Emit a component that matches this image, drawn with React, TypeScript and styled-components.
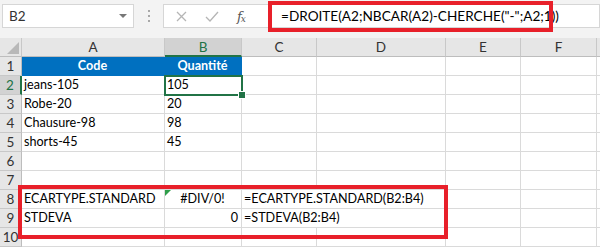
import React from "react";
import styled, { createGlobalStyle } from "styled-components";

const Global = createGlobalStyle`
  html, body { margin: 0; padding: 0; background: #ffffff; overflow: hidden; }
  body { font-family: Lato, "Noto Sans", sans-serif; }
`;

const Page = styled.div`
  position: relative;
  width: 600px;
  height: 250px;
  overflow: hidden;
  background: #ffffff;
`;

const Toolbar = styled.div`
  height: 38px;
  background: #f3f3f3;
  display: flex;
  align-items: flex-start;
  padding: 4px 0 0 2px;
  box-sizing: border-box;
`;

const NameBox = styled.div`
  width: 132px;
  height: 24px;
  box-sizing: border-box;
  background: #ffffff;
  border: 1px solid #d6d6d6;
  display: flex;
  align-items: center;
  justify-content: space-between;
  padding: 0 6px 0 6px;
  font-size: 13.5px;
  color: #333;
`;

const Caret = styled.span`
  width: 0;
  height: 0;
  border-left: 4px solid transparent;
  border-right: 4px solid transparent;
  border-top: 4px solid #777;
`;

const Grip = styled.div`
  width: 29px;
  height: 24px;
  display: flex;
  justify-content: center;
  align-items: center;
`;

const Dots = styled.div`
  display: flex;
  flex-direction: column;
  gap: 3px;
  & > span { width: 2px; height: 2px; background: #a8a8a8; display: block; }
`;

const Buttons = styled.div`
  width: 105px;
  height: 24px;
  box-sizing: border-box;
  background: #ffffff;
  border: 1px solid #d6d6d6;
  border-right: none;
  display: flex;
  align-items: center;
  padding-left: 12px;
  gap: 18px;
`;

const Fx = styled.span`
  font-family: "DejaVu Serif", "Liberation Serif", serif;
  font-style: italic;
  font-size: 13px;
  color: #555;
  letter-spacing: -1px;
  & > sub { font-size: 9px; vertical-align: -1px; }
`;

const Formula = styled.div`
  flex: 1;
  height: 24px;
  box-sizing: border-box;
  background: #ffffff;
  border: 1px solid #d6d6d6;
  display: flex;
  align-items: center;
  padding-left: 12px;
  font-size: 13.6px;
  color: #000;
  white-space: nowrap;
`;

const Sheet = styled.div`
  position: relative;
  display: grid;
  grid-template-columns: 22px 143px 77px 75px 129px 75px 76px 1fr;
  grid-auto-rows: 19px;
`;

const Corner = styled.div`
  background: #e6e6e6;
  border-right: 1px solid #c8c8c8;
  border-bottom: 1px solid #bdbdbd;
  box-sizing: border-box;
  position: relative;
  &::after {
    content: "";
    position: absolute;
    right: 2px;
    bottom: 2px;
    width: 0;
    height: 0;
    border-left: 12px solid transparent;
    border-bottom: 12px solid #b8b8b8;
  }
`;

const ColHead = styled.div<{ $sel?: boolean }>`
  background: ${(p) => (p.$sel ? "#d2d2d2" : "#e6e6e6")};
  color: ${(p) => (p.$sel ? "#217346" : "#333")};
  border-right: 1px solid #c8c8c8;
  border-bottom: ${(p) => (p.$sel ? "2px solid #217346" : "1px solid #bdbdbd")};
  box-sizing: border-box;
  display: flex;
  align-items: center;
  justify-content: center;
  font-size: 13.5px;
`;

const RowHead = styled.div<{ $sel?: boolean }>`
  background: ${(p) => (p.$sel ? "#d2d2d2" : "#e6e6e6")};
  color: ${(p) => (p.$sel ? "#217346" : "#333")};
  border-right: ${(p) => (p.$sel ? "2px solid #217346" : "1px solid #bdbdbd")};
  border-bottom: 1px solid #c8c8c8;
  box-sizing: border-box;
  display: flex;
  align-items: center;
  justify-content: center;
  font-size: 13.5px;
`;

const Cell = styled.div<{ $align?: "left" | "center" | "right"; $head?: boolean; $span?: number }>`
  grid-column: span ${(p) => p.$span ?? 1};
  background: ${(p) => (p.$head ? "#0070c0" : "#ffffff")};
  color: ${(p) => (p.$head ? "#ffffff" : "#000000")};
  font-weight: ${(p) => (p.$head ? 700 : 400)};
  border-right: 1px solid ${(p) => (p.$head ? "#0070c0" : "#dadada")};
  border-bottom: 1px solid ${(p) => (p.$head ? "#0070c0" : "#dadada")};
  box-sizing: border-box;
  display: flex;
  align-items: flex-end;
  padding: 0 3px 1px 2px;
  justify-content: ${(p) =>
    p.$align === "center" ? "center" : p.$align === "right" ? "flex-end" : "flex-start"};
  font-size: 12.6px;
  line-height: 17px;
  white-space: nowrap;
  position: relative;
`;

const ErrorMark = styled.span`
  position: absolute;
  left: 0;
  top: 0;
  width: 0;
  height: 0;
  border-top: 6px solid #2e9e4a;
  border-right: 6px solid transparent;
`;

const Selection = styled.div`
  position: absolute;
  left: 164px;
  top: 37px;
  width: 79px;
  height: 21px;
  border: 2px solid #217346;
  box-sizing: border-box;
  pointer-events: none;
  &::after {
    content: "";
    position: absolute;
    right: -5px;
    bottom: -5px;
    width: 6px;
    height: 6px;
    background: #217346;
    border: 1px solid #ffffff;
  }
`;

const RedBox = styled.div`
  position: absolute;
  border: 4px solid #e8202a;
  box-sizing: border-box;
  pointer-events: none;
`;

const cols = ["A", "B", "C", "D", "E", "F", ""];

type Row = { a?: string; b?: string; bAlign?: "left" | "center" | "right"; c?: string; err?: boolean };

const rows: Row[] = [
  { a: "jeans-105", b: "105" },
  { a: "Robe-20", b: "20" },
  { a: "Chausure-98", b: "98" },
  { a: "shorts-45", b: "45" },
  {},
  {},
  { a: "ECARTYPE.STANDARD", b: "#DIV/0!", bAlign: "center", c: "=ECARTYPE.STANDARD(B2:B4)", err: true },
  { a: "STDEVA", b: "0", bAlign: "right", c: "=STDEVA(B2:B4)" },
  {},
];

export default function App() {
  return (
    <Page>
      <Global />
      <Toolbar>
        <NameBox>
          B2
          <Caret />
        </NameBox>
        <Grip>
          <Dots>
            <span />
            <span />
            <span />
          </Dots>
        </Grip>
        <Buttons>
          <svg width="11" height="11" viewBox="0 0 11 11">
            <path d="M1 1 L10 10 M10 1 L1 10" stroke="#b5b5b5" strokeWidth="1.3" fill="none" />
          </svg>
          <svg width="14" height="11" viewBox="0 0 14 11">
            <path d="M1 6 L5 10 L13 1" stroke="#b5b5b5" strokeWidth="1.3" fill="none" />
          </svg>
          <Fx>
            f<sub>x</sub>
          </Fx>
        </Buttons>
        <Formula>=DROITE(A2;NBCAR(A2)-CHERCHE("-";A2;1))</Formula>
      </Toolbar>
      <Sheet>
        <Corner />
        {cols.map((c, i) => (
          <ColHead key={i} $sel={c === "B"}>
            {c}
          </ColHead>
        ))}
        <RowHead>1</RowHead>
        <Cell $head $align="center">Code</Cell>
        <Cell $head $align="center">Quantité</Cell>
        {cols.slice(2).map((_, i) => (
          <Cell key={i} />
        ))}
        {rows.map((r, i) => (
          <React.Fragment key={i}>
            <RowHead $sel={i === 0}>{i + 2}</RowHead>
            <Cell>{r.a}</Cell>
            <Cell $align={r.bAlign}>
              {r.err && <ErrorMark />}
              {r.b}
            </Cell>
            {r.c ? <Cell $span={2}>{r.c}</Cell> : (
              <>
                <Cell />
                <Cell />
              </>
            )}
            <Cell />
            <Cell />
            <Cell />
          </React.Fragment>
        ))}
        <Selection />
      </Sheet>
      <RedBox style={{ left: 268, top: 1, width: 285, height: 31 }} />
      <RedBox style={{ left: 18, top: 185, width: 430, height: 54 }} />
    </Page>
  );
}
